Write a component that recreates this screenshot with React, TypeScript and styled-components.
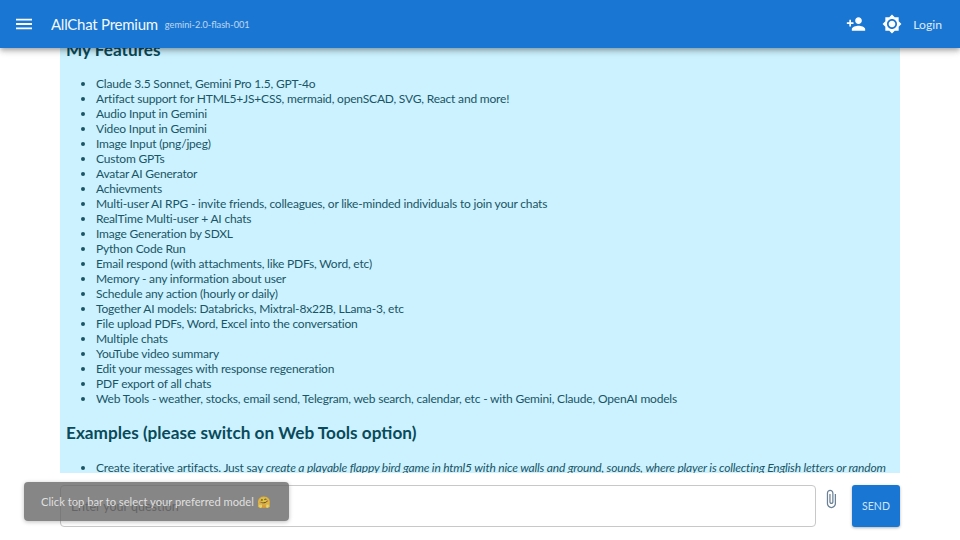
import React from "react";
import styled, { createGlobalStyle } from "styled-components";

const Global = createGlobalStyle`
  html, body { margin: 0; padding: 0; background: #fff; height: 100%; overflow: hidden; }
  body { font-family: "Lato", "Noto Sans", sans-serif; }
`;
const Page = styled.div`
  width: 960px; height: 540px; display: flex; flex-direction: column; position: relative; overflow: hidden;
`;
const Bar = styled.header`
  height: 48px; flex: none; background: #1976d2; color: #fff; display: flex; align-items: center;
  padding: 0 18px 0 16px; position: relative; z-index: 2;
  box-shadow: 0 2px 4px -1px rgba(0,0,0,.2), 0 4px 5px 0 rgba(0,0,0,.14), 0 1px 10px 0 rgba(0,0,0,.12);
`;
const Glyph = styled.svg<{ $size: number }>`
  width: ${p => p.$size}px; height: ${p => p.$size}px; fill: currentColor; flex: none; display: block;
`;
const Title = styled.span`
  font-size: 15px; letter-spacing: -0.25px; margin-left: 19px; white-space: nowrap; opacity: .95;
`;
const Model = styled.span`
  font-size: 9.2px; margin-left: 7px; opacity: .7; white-space: nowrap;
`;
const Spacer = styled.div`flex: 1;`;
const Login = styled.span`
  font-size: 12.2px; margin-left: 11px; opacity: .85;
`;
const AddIcon = styled.span`margin-right: 16px; display: flex;`;
const Viewport = styled.main`
  height: 425px; flex: none; width: 840px; margin: 0 auto; background: #ccf2ff; overflow: hidden; color: #1a5566;
`;
const Doc = styled.div`
  margin-top: -9px; padding: 0 6px;
`;
const Heading = styled.h2`
  font-size: 17.2px; line-height: 22px; font-weight: 700; margin: 0; color: #0a4a5a;
`;
const List = styled.ul`
  margin: 15px 0 0; padding: 0 0 0 30px; font-size: 12px; letter-spacing: -0.19px; line-height: 15px;
`;
const Item = styled.li`white-space: nowrap;`;
const Examples = styled(Heading)`margin-top: 16px;`;
const ExampleList = styled(List)`margin-top: 16px;`;
const Footer = styled.div`
  width: 840px; margin: 12px auto 0; height: 43px; display: flex; align-items: stretch;
`;
const Field = styled.div`
  width: 756px; height: 42px; border: 1px solid #c8c8c8; border-radius: 4px; box-sizing: border-box; flex: none;
  display: flex; align-items: center; padding: 0 10px; font-size: 12.5px; color: #666;
`;
const Clip = styled.span`
  width: 30px; display: flex; justify-content: center; padding-top: 4px; color: #6a8196; flex: none;
`;
const Send = styled.button`
  margin-left: 6px; width: 48px; height: 42px; border: 0; border-radius: 3px; background: #1976d2; color: #cfe6fb;
  font: 10.5px "Lato", sans-serif; padding: 0; box-shadow: 0 1px 3px rgba(0,0,0,.3);
`;
const Snack = styled.div`
  position: absolute; left: 24px; top: 482px; width: 265px; height: 39px; box-sizing: border-box; border-radius: 4px;
  background: rgba(100,100,100,.78); color: rgba(255,255,255,.75); font-size: 11.2px; display: flex; align-items: center;
  padding: 0 17px; white-space: nowrap; box-shadow: 0 1px 4px rgba(0,0,0,.25); z-index: 3;
`;

const features = [
  "Claude 3.5 Sonnet, Gemini Pro 1.5, GPT-4o",
  "Artifact support for HTML5+JS+CSS, mermaid, openSCAD, SVG, React and more!",
  "Audio Input in Gemini",
  "Video Input in Gemini",
  "Image Input (png/jpeg)",
  "Custom GPTs",
  "Avatar AI Generator",
  "Achievments",
  "Multi-user AI RPG - invite friends, colleagues, or like-minded individuals to join your chats",
  "RealTime Multi-user + AI chats",
  "Image Generation by SDXL",
  "Python Code Run",
  "Email respond (with attachments, like PDFs, Word, etc)",
  "Memory - any information about user",
  "Schedule any action (hourly or daily)",
  "Together AI models: Databricks, Mixtral-8x22B, LLama-3, etc",
  "File upload PDFs, Word, Excel into the conversation",
  "Multiple chats",
  "YouTube video summary",
  "Edit your messages with response regeneration",
  "PDF export of all chats",
  "Web Tools - weather, stocks, email send, Telegram, web search, calendar, etc - with Gemini, Claude, OpenAI models",
];

export default function App() {
  return (
    <Page>
      <Global />
      <Bar>
        <Glyph $size={16} viewBox="3 3 18 18"><path d="M3 18h18v-2H3v2zm0-5h18v-2H3v2zm0-7v2h18V6H3z" /></Glyph>
        <Title>AllChat Premium</Title>
        <Model>gemini-2.0-flash-001</Model>
        <Spacer />
        <AddIcon>
          <Glyph $size={20} viewBox="0 0 24 24"><path d="M15 12c2.21 0 4-1.79 4-4s-1.79-4-4-4-4 1.79-4 4 1.79 4 4 4zm-9-2V7H4v3H1v2h3v3h2v-3h3v-2H6zm9 4c-2.67 0-8 1.34-8 4v2h16v-2c0-2.66-5.33-4-8-4z" /></Glyph>
        </AddIcon>
        <Glyph $size={20} viewBox="0 0 24 24"><path d="M20 8.69V4h-4.69L12 .69 8.69 4H4v4.69L.69 12 4 15.31V20h4.69L12 23.31 15.31 20H20v-4.69L23.31 12 20 8.69zM12 18c-3.31 0-6-2.69-6-6s2.69-6 6-6 6 2.69 6 6-2.69 6-6 6zm0-10c-2.21 0-4 1.79-4 4s1.79 4 4 4 4-1.79 4-4-1.79-4-4-4z" /></Glyph>
        <Login>Login</Login>
      </Bar>
      <Viewport>
        <Doc>
          <Heading>My Features</Heading>
          <List>
            {features.map(f => <Item key={f}>{f}</Item>)}
          </List>
          <Examples>Examples (please switch on Web Tools option)</Examples>
          <ExampleList>
            <Item>Create iterative artifacts. Just say <em>create a playable flappy bird game in html5 with nice walls and ground, sounds, where player is collecting English letters or random</em></Item>
          </ExampleList>
        </Doc>
      </Viewport>
      <Footer>
        <Field>Enter your question</Field>
        <Clip>
          <Glyph $size={20} viewBox="0 0 24 24"><path d="M16.5 6v11.5c0 2.21-1.79 4-4 4s-4-1.79-4-4V5c0-1.38 1.12-2.5 2.5-2.5s2.5 1.12 2.5 2.5v10.5c0 .55-.45 1-1 1s-1-.45-1-1V6H10v9.5c0 1.38 1.12 2.5 2.5 2.5s2.5-1.12 2.5-2.5V5c0-2.21-1.79-4-4-4S7 2.79 7 5v12.5c0 3.04 2.46 5.5 5.5 5.5s5.5-2.46 5.5-5.5V6h-1.5z" /></Glyph>
        </Clip>
        <Send>SEND</Send>
      </Footer>
      <Snack>Click top bar to select your preferred model 🤗</Snack>
    </Page>
  );
}
